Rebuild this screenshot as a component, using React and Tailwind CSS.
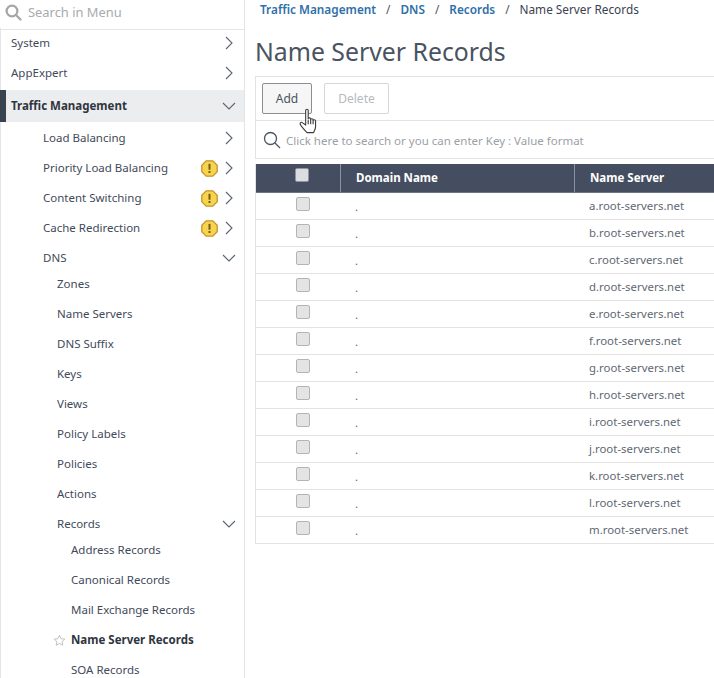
import React from "react";

function Chevron({ down }) {
  return (
    <svg width="14" height="14" viewBox="0 0 14 14" fill="none" stroke="#5b6470" strokeWidth="1.1" className="shrink-0">
      {down ? <path d="M1 4 L7 10 L13 4" /> : <path d="M4 1 L10 7 L4 13" />}
    </svg>
  );
}

function Warn() {
  return (
    <svg width="17" height="17" viewBox="0 0 17 17" className="shrink-0">
      <polygon points="5.2,0.8 11.8,0.8 16.2,5.2 16.2,11.8 11.8,16.2 5.2,16.2 0.8,11.8 0.8,5.2" fill="#f5d44f" stroke="#c9922a" strokeWidth="1.3" />
      <rect x="7.5" y="3.8" width="2" height="6" rx="0.6" fill="#7a5a10" />
      <rect x="7.5" y="11" width="2" height="2" fill="#7a5a10" />
    </svg>
  );
}

function Item({ label, indent, h = "h-[30px]", arrow, warn, bold, star, color = "text-[#3f4a5a]" }) {
  return (
    <div className={`flex items-center ${h} relative ${indent} pr-[8px]`}>
      {star && (
        <svg width="13" height="13" viewBox="0 0 24 24" fill="none" stroke="#b5b8bc" strokeWidth="1.6" className="absolute left-[52px] top-[9px]">
          <path d="M12 2.5l2.9 6.2 6.8.8-5 4.6 1.3 6.7-6-3.4-6 3.4 1.3-6.7-5-4.6 6.8-.8z" />
        </svg>
      )}
      <span className={`text-[11.5px] flex-1 truncate ${bold ? "font-bold text-[#2f3540]" : color}`}>{label}</span>
      {warn && <span className="mr-[4px] flex"><Warn /></span>}
      {arrow === "right" && <Chevron />}
      {arrow === "down" && <Chevron down />}
    </div>
  );
}

const L2 = "pl-[42px]";
const L3 = "pl-[56px]";
const L4 = "pl-[70px]";

const servers = ["a", "b", "c", "d", "e", "f", "g", "h", "i", "j", "k", "l", "m"];

function Check({ header }) {
  return (
    <span className={`block w-[14px] h-[14px] rounded-[2px] border ${header ? "border-[#8f96a3] bg-[#dcdde0]" : "border-[#b4b4b4] bg-[#e4e4e4]"}`} />
  );
}

function Row({ s }) {
  return (
    <div className="flex h-[27px] border-b border-[#e3e3e3] text-[11.4px] text-[#5f6874]">
      <div className="w-[85px] flex pt-[4px] pl-[40px]"><Check /></div>
      <div className="w-[234px] pl-[14px] pt-[5px] leading-[18px]">.</div>
      <div className="flex-1 pl-[14px] pt-[4px] leading-[18px] whitespace-nowrap">{s}.root-servers.net</div>
    </div>
  );
}

export default function App() {
  return (
    <div className="flex w-[714px] h-[678px] overflow-hidden bg-white" style={{ fontFamily: '"Noto Sans", "Open Sans", sans-serif' }}>
      <aside className="w-[245px] shrink-0 border-r border-[#e3e5e8] flex flex-col">
        <div className="h-[30px] shrink-0 flex items-center pl-[5px] pb-[4px] gap-[6px] border-b border-[#e3e5e8]">
          <svg width="17" height="17" viewBox="0 0 17 17" fill="none" stroke="#a3a5a8" strokeWidth="2.2">
            <circle cx="7" cy="7" r="5.4" />
            <path d="M11 11 L15.5 15.5" strokeLinecap="round" />
          </svg>
          <span className="text-[12.9px] text-[#a8abb0]">Search in Menu</span>
        </div>
        <div className="flex-1 border-l border-[#e3e5e8] min-h-0 -mt-[2px]">
          <Item label="System" indent="pl-[10px]" arrow="right" />
          <Item label="AppExpert" indent="pl-[10px]" arrow="right" />
          <div className="h-[2px]" />
          <div className="h-[32px] -ml-px mb-px flex items-center bg-[#ecedef] border-l-[6px] border-[#39424f] pl-[5px] pr-[8px]">
            <span className="text-[11.5px] font-bold text-[#2f3540] flex-1">Traffic Management</span>
            <Chevron down />
          </div>
          <Item label="Load Balancing" indent={L2} arrow="right" />
          <Item label="Priority Load Balancing" indent={L2} arrow="right" warn />
          <Item label="Content Switching" indent={L2} arrow="right" warn />
          <Item label="Cache Redirection" indent={L2} arrow="right" warn />
          <Item label="DNS" indent={L2} arrow="down" />
          <div className="-mt-[4px]">
            {["Zones", "Name Servers", "DNS Suffix", "Keys", "Views", "Policy Labels", "Policies", "Actions"].map((t) => (
              <Item key={t} label={t} indent={L3} />
            ))}
            <Item label="Records" indent={L3} arrow="down" />
          </div>
          <div className="-mt-[4px]">
            <Item label="Address Records" indent={L4} />
            <Item label="Canonical Records" indent={L4} />
            <Item label="Mail Exchange Records" indent={L4} />
            <Item label="Name Server Records" indent={L4} bold star />
            <Item label="SOA Records" indent={L4} />
          </div>
        </div>
      </aside>

      <main className="flex-1 min-w-0 pl-[10px]">
        <nav className="h-[19px] flex items-center gap-[10px] pl-[5px] text-[11.8px] whitespace-nowrap">
          <span className="font-semibold text-[#2f6fa8]">Traffic Management</span>
          <span className="text-[#4a5260]">/</span>
          <span className="font-semibold text-[#2f6fa8]">DNS</span>
          <span className="text-[#4a5260]">/</span>
          <span className="font-semibold text-[#2f6fa8]">Records</span>
          <span className="text-[#4a5260]">/</span>
          <span className="text-[#3a4250]">Name Server Records</span>
        </nav>
        <h1 className="mt-[14px] h-[43px] text-[24.8px] leading-[36px] font-normal text-[#4a5361] whitespace-nowrap">Name Server Records</h1>

        <div className="border border-r-0 border-[#e3e3e3] h-[83px] -mr-px">
          <div className="relative h-[44px] flex items-start gap-[12px] pt-[6px] pl-[6px] border-b border-[#e3e3e3]">
            <button className="w-[50px] h-[31px] rounded-[2px] border border-[#8a8f96] bg-[#f6f6f6] text-[12px] text-[#4a5361]">Add</button>
            <button className="w-[65px] h-[31px] rounded-[2px] border border-[#d4d6d9] bg-white text-[12px] text-[#b6b9bd]">Delete</button>
            <svg width="20" height="27" viewBox="0 0 18 24" fill="#fff" stroke="#3d3d3d" strokeWidth="1" strokeLinejoin="round" className="absolute left-[43px] top-[31px]">
              <path d="M6 2.2c0-1.6 2.3-1.6 2.3 0V9.5c0-1.1 2.2-1.1 2.2.2v.6c0-1.1 2.2-1.1 2.2.2v.7c0-1.1 2.2-1.1 2.2.2v5.3c0 2.4-1.3 3.8-1.8 5.3H7.2C5.6 20.5 1.2 15.5 1 14.2c-.2-1.4 1.2-2 2.3-1L6 15.2z" />
              <path d="M8.3 10.5v4M10.5 10.5v4M12.7 11v3.5" fill="none" />
            </svg>
          </div>
          <div className="h-[37px] flex items-center pl-[7px] gap-[5px]">
            <svg width="18" height="18" viewBox="0 0 18 18" fill="none" stroke="#4b5563" strokeWidth="1.3">
              <circle cx="7.5" cy="7.5" r="6" />
              <path d="M12 12 L17 17" />
            </svg>
            <span className="text-[11.5px] text-[#9b9fa5] whitespace-nowrap pt-[2px]">Click here to search or you can enter Key : Value format</span>
          </div>
        </div>

        <div className="mt-[5px] border-l border-[#e3e3e3]">
          <div className="flex h-[29px] bg-[#454e60] text-[11.5px] font-bold text-white border-b border-[#6b7587]">
            <div className="w-[85px] flex pt-[4px] pl-[39px] border-r border-[#8a93a3]"><Check header /></div>
            <div className="w-[234px] pl-[15px] flex items-center border-r border-[#8a93a3]">Domain Name</div>
            <div className="flex-1 pl-[15px] flex items-center whitespace-nowrap">Name Server</div>
          </div>
          {servers.map((s) => <Row key={s} s={s} />)}
        </div>
      </main>
    </div>
  );
}
